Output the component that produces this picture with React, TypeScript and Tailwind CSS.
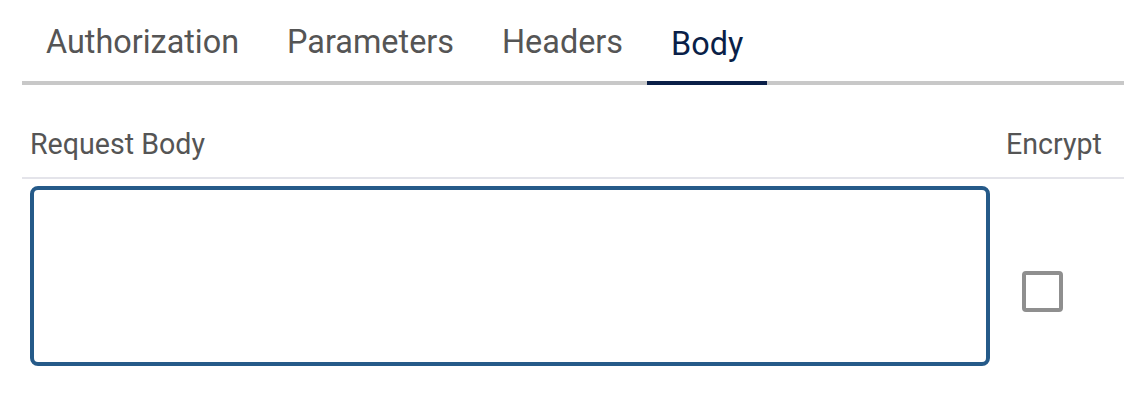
import { useState } from "react"

const tabs = ["Authorization", "Parameters", "Headers", "Body"]

export default function App() {
  const [active, setActive] = useState("Body")
  const [body, setBody] = useState("")
  const [encrypt, setEncrypt] = useState(false)

  return (
    <div className="w-[1124px] h-[420px] bg-white pl-[22px] font-['Roboto',sans-serif] text-[#555555]">
      <div className="flex border-b-4 border-[#c8c8c8]">
        {tabs.map((t) => (
          <button
            key={t}
            type="button"
            onClick={() => setActive(t)}
            className={
              t === active
                ? "px-[24px] pt-[23px] pb-[16px] -mb-[4px] border-b-4 border-[#0a1f48] text-[32.4px] leading-[38px] text-[#0a1f48]"
                : "px-[24px] pt-[23px] pb-[20px] text-[32.4px] leading-[38px]"
            }
          >
            {t}
          </button>
        ))}
      </div>

      <div className="flex border-b-2 border-[#e4e4ea] pt-[42px] pb-[16px] text-[28.6px] leading-[34px]">
        <div className="flex-1 pl-[8px]">Request Body</div>
        <div className="w-[126px] pl-[8px]">Encrypt</div>
      </div>

      <div className="flex pt-[7px]">
        <div className="flex-1 pl-2 pr-2">
          <textarea
            value={body}
            onChange={(e) => setBody(e.target.value)}
            className="block w-[960px] h-[180px] resize-none rounded-[8px] border-4 border-[#255a89] outline-none p-3 text-[28px]"
          />
        </div>
        <div className="w-[126px] pl-[24px] pt-[85px]">
          <button
            type="button"
            onClick={() => setEncrypt(!encrypt)}
            className="w-[41px] h-[41px] rounded-[4px] border-4 border-[#8f8f8f] bg-white"
          >
            {encrypt && <span className="block text-[24px] leading-none text-[#255a89]">✓</span>}
          </button>
        </div>
      </div>
    </div>
  )
}
